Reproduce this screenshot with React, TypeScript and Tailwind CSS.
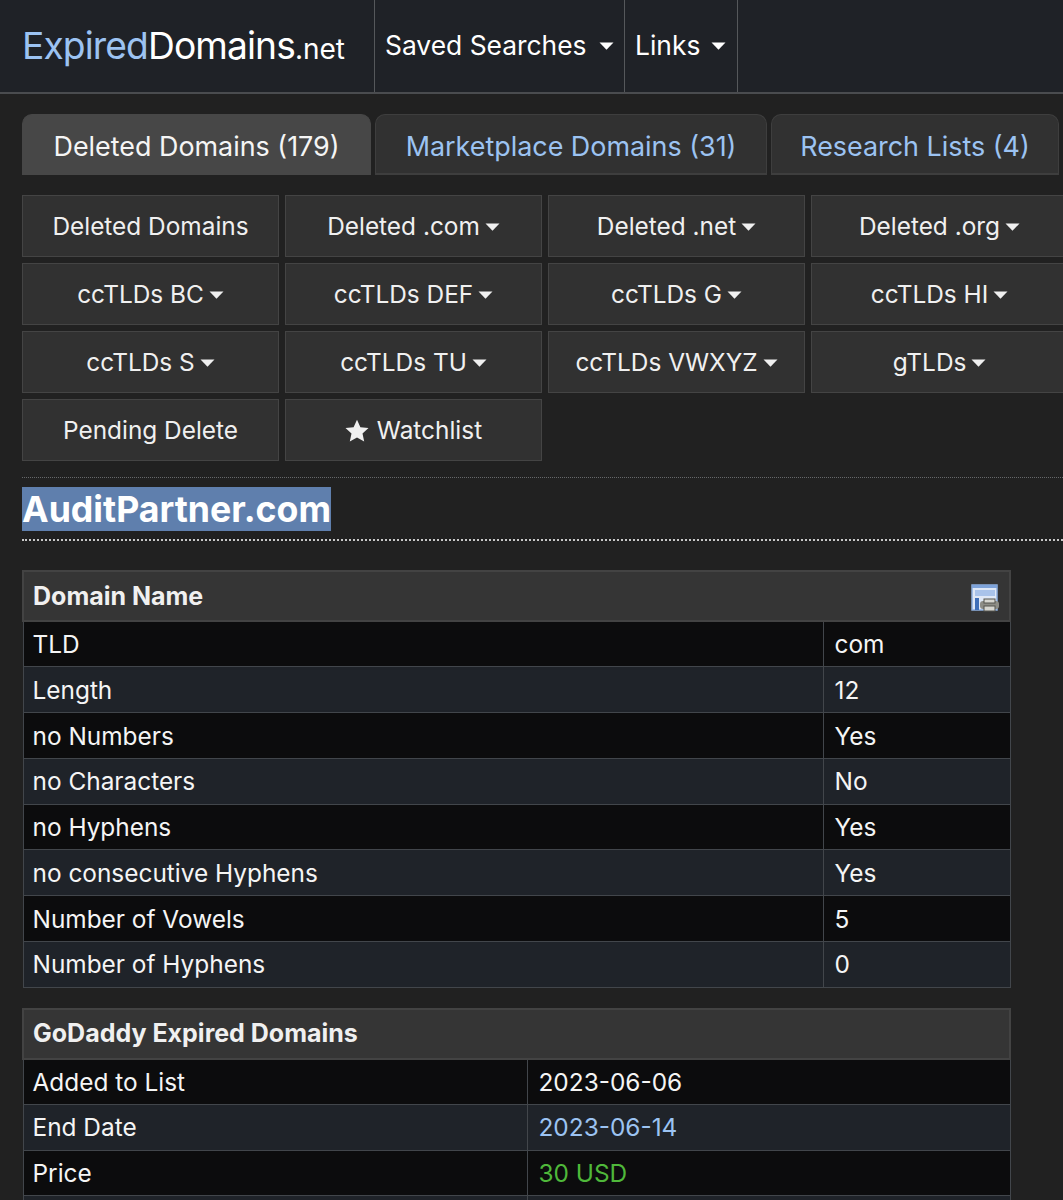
import React from 'react';

const font = { fontFamily: 'Inter, "Noto Sans", sans-serif' };

const Caret = ({ className = '' }: { className?: string }) => (
  <svg viewBox="0 0 14 8" className={`inline-block w-[15px] h-[8px] ${className}`} fill="currentColor">
    <path d="M0 0.5h14L7 7.8z" />
  </svg>
);

const PrintIcon = () => (
  <svg viewBox="0 0 28 28" className="mt-[2px] w-[28px] h-[28px]">
    <rect x="1" y="1" width="25" height="25" fill="#dfe8f6" stroke="#8fb0e0" strokeWidth="1.5" />
    <rect x="1" y="1" width="25" height="3" fill="#7ea3da" />
    <rect x="4" y="6" width="20" height="6" fill="#a9c3ea" />
    <rect x="4" y="14" width="4" height="12" fill="#3f6fb8" />
    <rect x="9" y="17" width="19" height="8" rx="3" fill="#8d8d86" />
    <rect x="13" y="15" width="11" height="4" fill="#d6d6d0" stroke="#55554f" strokeWidth="1" />
    <rect x="13" y="22" width="11" height="5" fill="#d6d6d0" stroke="#55554f" strokeWidth="1" />
  </svg>
);

const tabs = [
  { label: 'Deleted Domains (179)', width: 'w-[349px]', active: true },
  { label: 'Marketplace Domains (31)', width: 'w-[392px]', active: false },
  { label: 'Research Lists (4)', width: 'w-[288px]', active: false },
];

const buttons = [
  { label: 'Deleted Domains' },
  { label: 'Deleted .com', caret: true },
  { label: 'Deleted .net', caret: true },
  { label: 'Deleted .org', caret: true },
  { label: 'ccTLDs BC', caret: true },
  { label: 'ccTLDs DEF', caret: true },
  { label: 'ccTLDs G', caret: true },
  { label: 'ccTLDs HI', caret: true },
  { label: 'ccTLDs S', caret: true },
  { label: 'ccTLDs TU', caret: true },
  { label: 'ccTLDs VWXYZ', caret: true },
  { label: 'gTLDs', caret: true },
  { label: 'Pending Delete' },
  { label: 'Watchlist', star: true },
];

const domainRows = [
  ['TLD', 'com'],
  ['Length', '12'],
  ['no Numbers', 'Yes'],
  ['no Characters', 'No'],
  ['no Hyphens', 'Yes'],
  ['no consecutive Hyphens', 'Yes'],
  ['Number of Vowels', '5'],
  ['Number of Hyphens', '0'],
];

const InfoTable = ({
  title,
  firstCol,
  rows,
  icon,
}: {
  title: string;
  firstCol: string;
  rows: { k: string; v: string; color?: string }[];
  icon?: boolean;
}) => (
  <table className="w-[989px] table-fixed border-collapse text-[24.4px] text-[#f5f5f5]">
    <colgroup>
      <col className={firstCol} />
      <col />
    </colgroup>
    <thead>
      <tr className="h-[50px]">
        <th
          colSpan={2}
          className="border-2 border-[#434343] bg-[#353535] pl-[9px] pr-[10px] pt-[1px] pb-0 text-left text-[25px] font-bold text-[#f0f0f0]"
        >
          <div className="flex items-center justify-between">
            <span>{title}</span>
            {icon && <PrintIcon />}
          </div>
        </th>
      </tr>
    </thead>
    <tbody>
      {rows.map((r, i) => (
        <tr key={i} className={`h-[45.75px] ${i % 2 === 0 ? 'bg-[#0c0c0d]' : 'bg-[#1f2329]'}`}>
          <td className="border border-[#42464b] px-[9px] pt-[1px] pb-0">{r.k}</td>
          <td className={`border border-[#42464b] px-[11px] pt-[1px] pb-0 ${r.color ?? ''}`}>{r.v}</td>
        </tr>
      ))}
    </tbody>
  </table>
);

export default function App() {
  return (
    <div style={font} className="h-screen w-full overflow-hidden bg-[#212121] text-[#f5f5f5]">
      <header className="flex h-[94px] items-stretch border-b-2 border-[#4a4c4f] bg-[#1f2227]">
        <div className="flex w-[375px] items-center border-r border-[#55585b] pl-[22px]">
          <span className="text-[37.2px] tracking-[-0.9px] leading-none">
            <span className="text-[#9cc3f2]">Expired</span>
            <span className="text-white">Domains</span>
            <span className="text-[28px] tracking-normal text-white">.net</span>
          </span>
        </div>
        <div className="flex w-[250px] items-center gap-[12px] border-r border-[#55585b] pl-[10px] text-[26.4px] text-white">
          Saved Searches <Caret />
        </div>
        <div className="flex w-[113px] items-center gap-[11px] border-r border-[#55585b] pl-[10px] text-[26.4px] text-white">
          Links <Caret />
        </div>
      </header>

      <main className="pl-[22px]">
        <nav className="mt-[20px] flex h-[61px] gap-[4px]">
          {tabs.map((t) => (
            <div
              key={t.label}
              className={`flex ${t.width} items-center justify-center rounded-t-[10px] border border-b-2 pt-[5px] text-[26.9px] ${
                t.active
                  ? 'border-[#474747] bg-[#474747] text-[#f5f5f5]'
                  : 'border-[#3e3e3e] bg-[#313131] text-[#9cc3f2]'
              }`}
            >
              {t.label}
            </div>
          ))}
        </nav>

        <div className="mt-[20px] grid grid-cols-[repeat(4,257px)] gap-x-[6px] gap-y-[6px]">
          {buttons.map((b) => (
            <div
              key={b.label}
              className="flex h-[62px] items-center justify-center gap-[5px] border border-[#444444] bg-[#313131] pt-[1px] text-[24.4px] text-[#f0f0f0]"
            >
              {b.star && (
                <svg viewBox="0 0 24 24" className="mr-[3px] h-[24px] w-[24px]" fill="currentColor">
                  <path d="M12 .8l3.4 7.4 8.1.9-6 5.5 1.7 8L12 18.5l-7.2 4.1 1.7-8-6-5.5 8.1-.9z" />
                </svg>
              )}
              {b.label}
              {b.caret && <Caret />}
            </div>
          ))}
        </div>

        <div className="mt-[16px] border-t border-dotted border-[#66686a] pt-[10px]">
          <h1 className="text-[35.7px] font-bold leading-[43px] text-white">
            <span className="bg-[#5f7fad]">AuditPartner.com</span>
          </h1>
        </div>
        <div className="mt-[8px] border-t-2 border-dotted border-[#c8c8c8]" />

        <div className="mt-[29px]">
          <InfoTable
            title="Domain Name"
            firstCol="w-[800px]"
            icon
            rows={domainRows.map(([k, v]) => ({ k, v }))}
          />
        </div>
        <div className="mt-[20px]">
          <InfoTable
            title="GoDaddy Expired Domains"
            firstCol="w-[504px]"
            rows={[
              { k: 'Added to List', v: '2023-06-06' },
              { k: 'End Date', v: '2023-06-14', color: 'text-[#9cc3f2]' },
              { k: 'Price', v: '30 USD', color: 'text-[#4fb83a]' },
              { k: '\u00a0', v: '' },
            ]}
          />
        </div>
      </main>
    </div>
  );
}
